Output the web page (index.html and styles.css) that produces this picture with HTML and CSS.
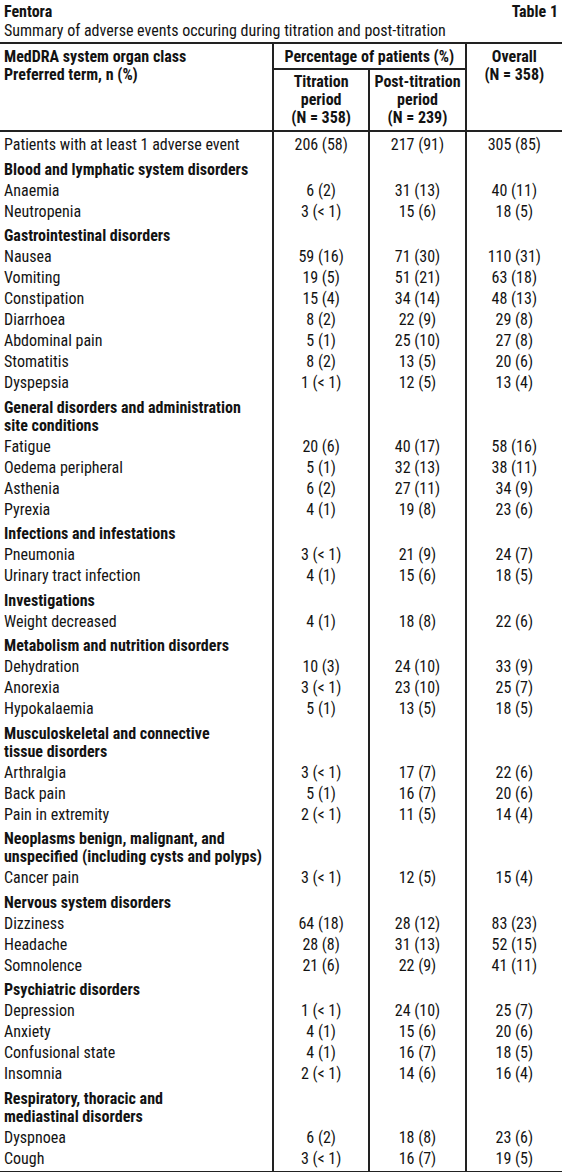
FILE: index.html
```html
<!DOCTYPE html>
<html>
<head>
  <title>Fentora - Table 1</title>
  <link rel="stylesheet" href="styles.css">
</head>
<body>
  <div class="caption">
    <div class="caption-top">
      <span class="drug">Fentora</span>
      <span class="table-no">Table 1</span>
    </div>
    <div class="caption-text">Summary of adverse events occuring during titration and post-titration</div>
  </div>

  <table class="ae-table">
    <colgroup>
      <col class="c-term">
      <col class="c-num">
      <col class="c-num">
      <col class="c-num">
    </colgroup>
    <thead>
      <tr>
        <th rowspan="2" class="h-term">MedDRA system organ class<br>Preferred term, n (%)</th>
        <th colspan="2" class="h-group">Percentage of patients (%)</th>
        <th rowspan="2" class="h-overall">Overall<br>(N = 358)</th>
      </tr>
      <tr>
        <th class="h-sub">Titration<br>period<br>(N = 358)</th>
        <th class="h-sub">Post-titration<br>period<br>(N = 239)</th>
      </tr>
    </thead>
    <tbody id="rows">
      <tr class="first"><td>Patients with at least 1 adverse event</td><td>206 (58)</td><td>217 (91)</td><td>305 (85)</td></tr>

      <tr class="soc"><td>Blood and lymphatic system disorders</td><td></td><td></td><td></td></tr>
      <tr><td>Anaemia</td><td>6 (2)</td><td>31 (13)</td><td>40 (11)</td></tr>
      <tr><td>Neutropenia</td><td>3 (&lt; 1)</td><td>15 (6)</td><td>18 (5)</td></tr>

      <tr class="soc"><td>Gastrointestinal disorders</td><td></td><td></td><td></td></tr>
      <tr><td>Nausea</td><td>59 (16)</td><td>71 (30)</td><td>110 (31)</td></tr>
      <tr><td>Vomiting</td><td>19 (5)</td><td>51 (21)</td><td>63 (18)</td></tr>
      <tr><td>Constipation</td><td>15 (4)</td><td>34 (14)</td><td>48 (13)</td></tr>
      <tr><td>Diarrhoea</td><td>8 (2)</td><td>22 (9)</td><td>29 (8)</td></tr>
      <tr><td>Abdominal pain</td><td>5 (1)</td><td>25 (10)</td><td>27 (8)</td></tr>
      <tr><td>Stomatitis</td><td>8 (2)</td><td>13 (5)</td><td>20 (6)</td></tr>
      <tr><td>Dyspepsia</td><td>1 (&lt; 1)</td><td>12 (5)</td><td>13 (4)</td></tr>

      <tr class="soc"><td>General disorders and administration<br>site conditions</td><td></td><td></td><td></td></tr>
      <tr><td>Fatigue</td><td>20 (6)</td><td>40 (17)</td><td>58 (16)</td></tr>
      <tr><td>Oedema peripheral</td><td>5 (1)</td><td>32 (13)</td><td>38 (11)</td></tr>
      <tr><td>Asthenia</td><td>6 (2)</td><td>27 (11)</td><td>34 (9)</td></tr>
      <tr><td>Pyrexia</td><td>4 (1)</td><td>19 (8)</td><td>23 (6)</td></tr>

      <tr class="soc"><td>Infections and infestations</td><td></td><td></td><td></td></tr>
      <tr><td>Pneumonia</td><td>3 (&lt; 1)</td><td>21 (9)</td><td>24 (7)</td></tr>
      <tr><td>Urinary tract infection</td><td>4 (1)</td><td>15 (6)</td><td>18 (5)</td></tr>

      <tr class="soc"><td>Investigations</td><td></td><td></td><td></td></tr>
      <tr><td>Weight decreased</td><td>4 (1)</td><td>18 (8)</td><td>22 (6)</td></tr>

      <tr class="soc"><td>Metabolism and nutrition disorders</td><td></td><td></td><td></td></tr>
      <tr><td>Dehydration</td><td>10 (3)</td><td>24 (10)</td><td>33 (9)</td></tr>
      <tr><td>Anorexia</td><td>3 (&lt; 1)</td><td>23 (10)</td><td>25 (7)</td></tr>
      <tr><td>Hypokalaemia</td><td>5 (1)</td><td>13 (5)</td><td>18 (5)</td></tr>

      <tr class="soc"><td>Musculoskeletal and connective<br>tissue disorders</td><td></td><td></td><td></td></tr>
      <tr><td>Arthralgia</td><td>3 (&lt; 1)</td><td>17 (7)</td><td>22 (6)</td></tr>
      <tr><td>Back pain</td><td>5 (1)</td><td>16 (7)</td><td>20 (6)</td></tr>
      <tr><td>Pain in extremity</td><td>2 (&lt; 1)</td><td>11 (5)</td><td>14 (4)</td></tr>

      <tr class="soc"><td>Neoplasms benign, malignant, and<br>unspecified (including cysts and polyps)</td><td></td><td></td><td></td></tr>
      <tr><td>Cancer pain</td><td>3 (&lt; 1)</td><td>12 (5)</td><td>15 (4)</td></tr>

      <tr class="soc"><td>Nervous system disorders</td><td></td><td></td><td></td></tr>
      <tr><td>Dizziness</td><td>64 (18)</td><td>28 (12)</td><td>83 (23)</td></tr>
      <tr><td>Headache</td><td>28 (8)</td><td>31 (13)</td><td>52 (15)</td></tr>
      <tr><td>Somnolence</td><td>21 (6)</td><td>22 (9)</td><td>41 (11)</td></tr>

      <tr class="soc"><td>Psychiatric disorders</td><td></td><td></td><td></td></tr>
      <tr><td>Depression</td><td>1 (&lt; 1)</td><td>24 (10)</td><td>25 (7)</td></tr>
      <tr><td>Anxiety</td><td>4 (1)</td><td>15 (6)</td><td>20 (6)</td></tr>
      <tr><td>Confusional state</td><td>4 (1)</td><td>16 (7)</td><td>18 (5)</td></tr>
      <tr><td>Insomnia</td><td>2 (&lt; 1)</td><td>14 (6)</td><td>16 (4)</td></tr>

      <tr class="soc"><td>Respiratory, thoracic and<br>mediastinal disorders</td><td></td><td></td><td></td></tr>
      <tr><td>Dyspnoea</td><td>6 (2)</td><td>18 (8)</td><td>23 (6)</td></tr>
      <tr><td>Cough</td><td>3 (&lt; 1)</td><td>16 (7)</td><td>19 (5)</td></tr>
    </tbody>
  </table>
</body>
</html>
```

FILE: styles.css
```css
body {
  margin: 0;
  padding: 0;
  background-color: #fff;
  color: #131313;
  font-family: "Roboto Condensed", "Liberation Sans Narrow", "DejaVu Sans Condensed", sans-serif;
  font-size: 16px;
}

.caption {
  padding: 3px 4px 0 4px;
}

.caption-top {
  display: flex;
  justify-content: space-between;
  font-weight: bold;
  line-height: 18px;
}

.caption-text {
  line-height: 19px;
  padding-bottom: 2px;
}

.ae-table {
  width: 562px;
  border-collapse: collapse;
  table-layout: fixed;
  border-bottom: 2px solid #222;
}

.c-term {
  width: 272px;
}

.c-num {
  width: 96px;
}

th, td {
  padding: 1px 4px 2px 4px;
  line-height: 18px;
  vertical-align: top;
  white-space: nowrap;
}

th {
  font-weight: bold;
  text-align: center;
}

thead {
  border-top: 2px solid #222;
  border-bottom: 2px solid #222;
}

.h-term {
  text-align: left;
  line-height: 18px;
  padding-top: 4px;
  border-right: 2px solid #222;
}

.h-group {
  border-bottom: 2px solid #222;
  padding-top: 4px;
}

.h-overall {
  padding-top: 4px;
}

.h-sub {
  padding-top: 3px;
  padding-bottom: 3px;
}

th + th, td + td {
  border-left: 2px solid #222;
}

td + td {
  text-align: center;
}

tbody tr.first td {
  padding-top: 4px;
}

tbody tr.soc td {
  padding-top: 4.5px;
  font-weight: bold;
}

tbody tr:last-child td {
  padding-bottom: 3px;
}
```
